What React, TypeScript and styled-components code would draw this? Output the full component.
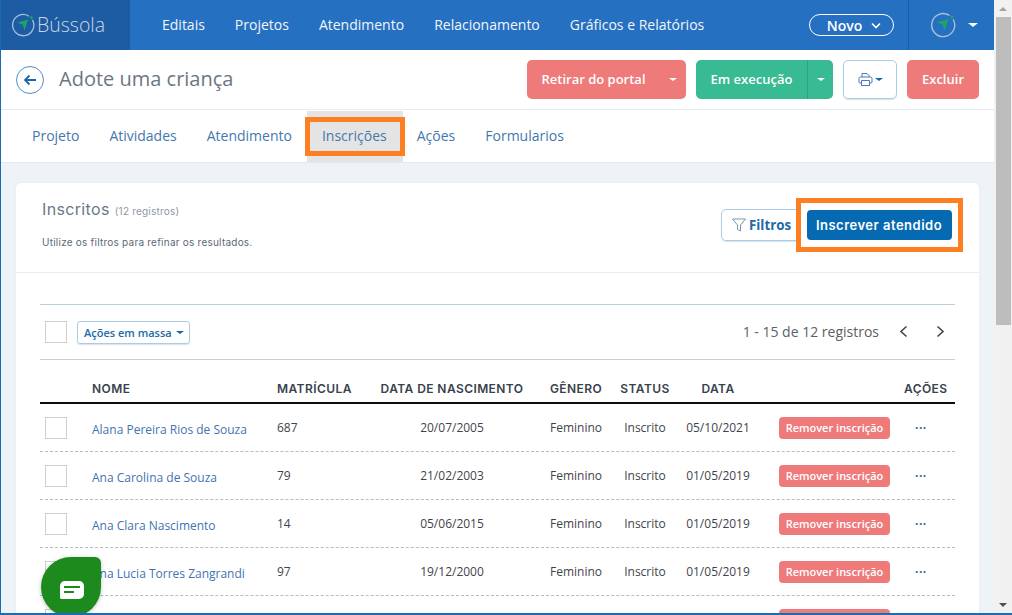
import React from "react";
import styled, { createGlobalStyle } from "styled-components";

const Global = createGlobalStyle`
  html, body { margin: 0; padding: 0; height: 100%; overflow: hidden; background: #fff; }
  #root { height: 100%; }
  * { box-sizing: border-box; }
  body { font-family: "Open Sans", "Liberation Sans", sans-serif; }
`;

const Frame = styled.div`
  position: relative; width: 1012px; height: 615px; display: flex; overflow: hidden;
  border-left: 1px solid #1a6db5; border-bottom: 2px solid #1a6db5;
`;
const Page = styled.div`
  width: 993px; height: 100%; display: flex; flex-direction: column; overflow: hidden; flex: none;
`;
const Scrollbar = styled.div`
  width: 18px; flex: none; background: #f1f1f1; display: flex; flex-direction: column; align-items: center; position: relative;
`;
const ScrollArrow = styled.div<{ $down?: boolean }>`
  height: 17px; width: 100%; display: flex; align-items: center; justify-content: center;
  &::after {
    content: ""; border-left: 4px solid transparent; border-right: 4px solid transparent;
    ${p => p.$down ? "border-top: 4px solid #505050;" : "border-bottom: 4px solid #a3a3a3;"}
  }
`;
const ScrollThumb = styled.div`
  width: 15px; height: 308px; background: #bdbdbd;
`;
const ScrollFill = styled.div` flex: 1; `;

const Nav = styled.header`
  height: 50px; flex: none; background: #2670c1; display: flex; align-items: stretch; color: #fff;
`;
const Brand = styled.div`
  width: 129px; background: #1d5ca3; display: flex; align-items: center; padding-left: 10px; gap: 2px;
`;
const BrandName = styled.span`
  font-size: 19.5px; font-weight: 300; color: #c9d7e6; font-family: "Open Sans", sans-serif; padding-bottom: 1px;
`;
const NavLinks = styled.nav`
  display: flex; align-items: center; gap: 30px; padding-left: 32px; padding-bottom: 2px; flex: 1;
`;
const NavLink = styled.a`
  font-size: 14px; color: #f1f6fb; white-space: nowrap;
`;
const NewPill = styled.div`
  align-self: center; width: 85px; height: 22px; border: 1px solid #fff; border-radius: 12px; display: flex; align-items: center;
  justify-content: center; gap: 9px; font-size: 14px; font-weight: 600; color: #fff; margin-right: 14px; padding-left: 5px;
`;
const NavUser = styled.div`
  width: 86px; border-left: 1px solid #1d5ca3; display: flex; align-items: center; padding-left: 21px; gap: 12px;
`;
const Caret = styled.span<{ $color?: string; $w?: number }>`
  display: inline-block; flex: none;
  border-left: ${p => p.$w ?? 4}px solid transparent; border-right: ${p => p.$w ?? 4}px solid transparent;
  border-top: ${p => (p.$w ?? 4) * 0.8}px solid ${p => p.$color ?? "#fff"};
`;

const Head = styled.div`
  height: 60px; flex: none; display: flex; align-items: center; padding: 0 15px 0 15px; border-bottom: 1px solid #e4ecf1; background: #fff;
`;
const Back = styled.div`
  width: 28px; height: 28px; border-radius: 50%; border: 1px solid #4f8fcb; color: #1e66ad; display: flex; align-items: center; justify-content: center; margin-right: 15px;
`;
const Title = styled.h1`
  margin: 0 0 2px; font-size: 20px; font-weight: 400; color: #6c7683; flex: 1;
`;
const Actions = styled.div` display: flex; gap: 10px; `;
const Solid = styled.div<{ $bg: string; $w: number }>`
  width: ${p => p.$w}px; height: 39px; background: ${p => p.$bg}; border-radius: 5px; display: flex; align-items: stretch;
  color: #fff; font-size: 13px; font-weight: 600;
`;
const SolidLabel = styled.span`
  flex: 1; display: flex; align-items: center; justify-content: center; white-space: nowrap; padding-bottom: 2px;
`;
const SolidCaret = styled.span<{ $line?: boolean }>`
  width: 26px; display: flex; align-items: center; justify-content: center; flex: none;
  ${p => p.$line ? "border-left: 1px solid #2fa380;" : ""}
`;
const Outline = styled.div`
  width: 54px; height: 39px; border: 1px solid #a9cde6; border-radius: 5px; display: flex; align-items: center; justify-content: center; gap: 2px; box-shadow: 0 1px 1px #d6e3ec;
`;

const Tabs = styled.div`
  height: 53px; flex: none; display: flex; align-items: center; padding-left: 16px; border-bottom: 1px solid #dfe9ef; background: #fff;
`;
const Tab = styled.a<{ $active?: boolean }>`
  position: relative; height: 51px; display: flex; align-items: center; padding: 0 15px 2px; font-size: 14px; color: #4478ad; white-space: nowrap;
  ${p => p.$active ? "background: #e4e4e4; padding-right: 16px; margin-right: -1px;" : ""}
`;
const TabHighlight = styled.span`
  position: absolute; left: -2px; right: -2px; top: 6px; bottom: 6px; border: 5px solid #fd7f23;
`;

const Body = styled.div`
  flex: 1; background: #eef3f7; padding: 20px 15px 0 15px; min-height: 0;
`;
const Card = styled.section`
  background: #fff; border-radius: 5px 5px 0 0; height: 100%;
  box-shadow: 0 0 3px rgba(190,205,215,.25);
`;
const CardHead = styled.div`
  height: 90px; border-bottom: 1px solid #e8eff4; padding: 16px 16px 0 26px; display: flex; justify-content: space-between;
`;
const CardTitle = styled.div`
  font-family: Inter, sans-serif; font-size: 16px; color: #6d7887; line-height: 20px; letter-spacing: .35px; white-space: nowrap;
`;
const CardCount = styled.small`
  font-size: 10px; color: #8f98a3; margin-left: 5px; font-weight: 400; letter-spacing: .2px;
`;
const CardHint = styled.div`
  font-family: Inter, sans-serif; font-size: 10px; color: #5d6875; margin-top: 15px; letter-spacing: .23px; white-space: nowrap;
`;
const CardTools = styled.div`
  display: flex; align-items: flex-start; padding-top: 10px; position: relative;
`;
const FilterBtn = styled.div`
  width: 80px; height: 32px; border: 1px solid #a9cde6; border-radius: 5px; display: flex; align-items: center; gap: 2px; padding-left: 9px;
  font-size: 13.3px; font-weight: 700; color: #226aa8; font-family: "Open Sans", sans-serif; box-shadow: 0 1px 1px #d6e3ec;
  white-space: nowrap;
`;
const CtaBox = styled.div`
  margin-left: -5px; margin-top: -11px; height: 54px; width: 167px; border: 5px solid #fd7f23; background: #fff; display: flex; align-items: center; justify-content: center; z-index: 1; padding-right: 1px;
`;
const Cta = styled.div`
  width: 145px; height: 30px; background: #066ab2; border-radius: 4px; color: #fff; display: flex; align-items: center; justify-content: center;
  font-family: Inter, sans-serif; font-size: 13px; font-weight: 600; white-space: nowrap; letter-spacing: .5px;
`;

const Content = styled.div` padding: 31px 24px 0 24px; `;
const Toolbar = styled.div`
  height: 56px; border-top: 1px solid #bccfdd; border-bottom: 1px solid #c6cfd9; display: flex; align-items: center; padding: 0 10px 0 5px;
`;
const Check = styled.span`
  width: 22px; height: 22px; border: 1px solid #d2cfca; background: #fff; display: block; flex: none;
`;
const BulkBtn = styled.div`
  margin-left: 10px; width: 113px; height: 23px; border: 1px solid #a9cde6; border-radius: 3px; display: flex; align-items: center; gap: 4px; padding-left: 6px;
  font-size: 11px; font-weight: 600; color: #226aa8; white-space: nowrap; box-shadow: 0 1px 1px #d6e3ec;
`;
const Pager = styled.div`
  margin-left: auto; display: flex; align-items: center; font-size: 14px; color: #5d5f62; white-space: nowrap; padding-bottom: 2px;
`;
const PagerBtn = styled.span<{ $first?: boolean }>`
  display: flex; align-items: center; margin-left: ${p => p.$first ? 20 : 28}px; color: #40464c;
`;

const columns = "52px 185px 91px 168px 80px 58px 88px 140px 53px";
const HeadRow = styled.div`
  display: grid; grid-template-columns: ${columns}; height: 44px; align-items: center; border-bottom: 2px solid #0c0c0c;
  font-family: Inter, sans-serif; font-size: 12px; font-weight: 600; color: #39424c; padding-top: 14px; white-space: nowrap; letter-spacing: .42px;
`;
const HeadCell = styled.div<{ $center?: boolean; $pad?: number }>`
  ${p => p.$center ? "text-align: center;" : ""}
  ${p => p.$pad ? `padding-left: ${p.$pad}px;` : ""}
`;
const Row = styled.div`
  display: grid; grid-template-columns: ${columns}; height: 48px; align-items: center; border-bottom: 1px dashed #b5bcc6; font-size: 12px; color: #3f444a; white-space: nowrap;
`;
const CheckCell = styled.div` padding-left: 5px; `;
const NameCell = styled.a` color: #3f73b2; font-size: 12px; padding-top: 3px; `;
const TextCell = styled.div<{ $center?: boolean }>`
  ${p => p.$center ? "text-align: center;" : ""}
`;
const RemoveCell = styled.div` padding-left: 17px; `;
const RemoveBtn = styled.div`
  width: 111px; height: 22px; background: #ee7a7a; color: #fff; font-size: 11px; font-weight: 600; border-radius: 4px; display: flex; align-items: center; justify-content: center;
`;
const DotsCell = styled.div`
  padding-left: 13px; color: #3c62a8; font-weight: 700; font-size: 12px; letter-spacing: .5px; line-height: 10px; padding-bottom: 5px;
`;
const Chat = styled.div`
  position: absolute; left: 40px; top: 557px; width: 60px; height: 60px; border-radius: 50% 6px 50% 50%; background: #1c8a1c;
  display: flex; align-items: center; justify-content: center; box-shadow: 0 1px 4px rgba(0,0,0,.25); padding-top: 5px; padding-left: 1px;
`;

const Compass = ({ size = 24, ring = "#a9bfd8" }: { size?: number; ring?: string }) => (
  <svg width={size} height={size} viewBox="0 0 26 26" fill="none">
    <path d="M19 3.200A11.500 11.500 0 1 0 23.500 8" stroke={ring} strokeWidth="1.400" strokeLinecap="round" />
    <path d="M7 10.500 18.500 7 14.500 19 12.800 12.600Z" fill="#1da561" />
    <circle cx="22" cy="5" r="1.600" fill="#1da561" />
  </svg>
);

const Printer = () => (
  <svg width="15" height="15" viewBox="0 0 15 15" fill="none" stroke="#4a78b8" strokeWidth="1">
    <path d="M4 5V1.500h5l2 2V5" />
    <path d="M3.500 11H2a1 1 0 0 1-1-1V6.500a1.500 1.500 0 0 1 1.500-1.500h10A1.500 1.500 0 0 1 14 6.500V10a1 1 0 0 1-1 1h-1.500" />
    <path d="M3.500 8.500h8v5h-8z" />
  </svg>
);

const rows = [
  ["Alana Pereira Rios de Souza", "687", "20/07/2005", "05/10/2021"],
  ["Ana Carolina de Souza", "79", "21/02/2003", "01/05/2019"],
  ["Ana Clara Nascimento", "14", "05/06/2015", "01/05/2019"],
  ["Ana Lucia Torres Zangrandi", "97", "19/12/2000", "01/05/2019"],
];

export default function App() {
  return (
    <>
      <Global />
      <Frame>
        <Page>
          <Nav>
            <Brand>
              <Compass />
              <BrandName>Bússola</BrandName>
            </Brand>
            <NavLinks>
              <NavLink>Editais</NavLink>
              <NavLink>Projetos</NavLink>
              <NavLink>Atendimento</NavLink>
              <NavLink>Relacionamento</NavLink>
              <NavLink>Gráficos e Relatórios</NavLink>
            </NavLinks>
            <NewPill>
              Novo
              <svg width="10" height="7" viewBox="0 0 10 7" fill="none" stroke="#fff" strokeWidth="1.600"><path d="M1 1.500 5 5.500 9 1.500" /></svg>
            </NewPill>
            <NavUser>
              <Compass size={26} />
              <Caret $w={5.500} />
            </NavUser>
          </Nav>
          <Head>
            <Back>
              <svg width="14" height="12" viewBox="0 0 14 12" fill="none" stroke="currentColor" strokeWidth="1.800"><path d="M13 6H2M6.500 1.500 2 6l4.500 4.500" /></svg>
            </Back>
            <Title>Adote uma criança</Title>
            <Actions>
              <Solid $bg="#ee7a7a" $w={159}>
                <SolidLabel>Retirar do portal</SolidLabel>
                <SolidCaret><Caret /></SolidCaret>
              </Solid>
              <Solid $bg="#38ba92" $w={137}>
                <SolidLabel>Em execução</SolidLabel>
                <SolidCaret $line><Caret /></SolidCaret>
              </Solid>
              <Outline>
                <Printer />
                <Caret $color="#1566ac" />
              </Outline>
              <Solid $bg="#ee7a7a" $w={72}>
                <SolidLabel>Excluir</SolidLabel>
              </Solid>
            </Actions>
          </Head>
          <Tabs>
            <Tab>Projeto</Tab>
            <Tab>Atividades</Tab>
            <Tab>Atendimento</Tab>
            <Tab $active>Inscrições<TabHighlight /></Tab>
            <Tab>Ações</Tab>
            <Tab>Formularios</Tab>
          </Tabs>
          <Body>
            <Card>
              <CardHead>
                <div>
                  <CardTitle>Inscritos<CardCount>(12 registros)</CardCount></CardTitle>
                  <CardHint>Utilize os filtros para refinar os resultados.</CardHint>
                </div>
                <CardTools>
                  <FilterBtn>
                    <svg width="16" height="16" viewBox="0 0 16 16" fill="none" stroke="#7d94ad" strokeWidth="1"><path d="M1.500 2h13L9.500 8v6L6.500 12.500V8z" /></svg>
                    Filtros
                  </FilterBtn>
                  <CtaBox><Cta>Inscrever atendido</Cta></CtaBox>
                </CardTools>
              </CardHead>
              <Content>
                <Toolbar>
                  <Check />
                  <BulkBtn>Ações em massa <Caret $color="#1566ac" /></BulkBtn>
                  <Pager>
                    1 - 15 de 12 registros
                    <PagerBtn $first>
                      <svg width="9" height="13" viewBox="0 0 9 13" fill="none" stroke="currentColor" strokeWidth="1.600"><path d="M7.500 1.500 2 6.500l5.500 5" /></svg>
                    </PagerBtn>
                    <PagerBtn>
                      <svg width="9" height="13" viewBox="0 0 9 13" fill="none" stroke="currentColor" strokeWidth="1.600"><path d="M1.500 1.500 7 6.500l-5.500 5" /></svg>
                    </PagerBtn>
                  </Pager>
                </Toolbar>
                <HeadRow>
                  <div />
                  <HeadCell>NOME</HeadCell>
                  <HeadCell>MATRÍCULA</HeadCell>
                  <HeadCell $center>DATA DE NASCIMENTO</HeadCell>
                  <HeadCell $center>GÊNERO</HeadCell>
                  <HeadCell $center>STATUS</HeadCell>
                  <HeadCell $center>DATA</HeadCell>
                  <div />
                  <HeadCell $pad={2}>AÇÕES</HeadCell>
                </HeadRow>
                {rows.map(r => (
                  <Row key={r[0]}>
                    <CheckCell><Check /></CheckCell>
                    <NameCell>{r[0]}</NameCell>
                    <TextCell>{r[1]}</TextCell>
                    <TextCell $center>{r[2]}</TextCell>
                    <TextCell $center>Feminino</TextCell>
                    <TextCell $center>Inscrito</TextCell>
                    <TextCell $center>{r[3]}</TextCell>
                    <RemoveCell><RemoveBtn>Remover inscrição</RemoveBtn></RemoveCell>
                    <DotsCell>...</DotsCell>
                  </Row>
                ))}
                <Row>
                  <CheckCell><Check /></CheckCell>
                  <div /><div /><div /><div /><div /><div />
                  <RemoveCell><RemoveBtn /></RemoveCell>
                </Row>
              </Content>
            </Card>
          </Body>
        </Page>
        <Scrollbar>
          <ScrollArrow />
          <ScrollThumb />
          <ScrollFill />
          <ScrollArrow $down />
        </Scrollbar>
        <Chat>
          <svg width="24" height="18" viewBox="0 0 24 18">
            <path d="M5 0h14a5 5 0 0 1 5 5v8a5 5 0 0 1-5 5H1.500A1.500 1.500 0 0 1 0 16.500V5a5 5 0 0 1 5-5z" fill="#fff" />
            <rect x="4" y="5" width="16" height="2" fill="#1c8a1c" />
            <rect x="4" y="10" width="10" height="2" fill="#1c8a1c" />
          </svg>
        </Chat>
      </Frame>
    </>
  );
}
